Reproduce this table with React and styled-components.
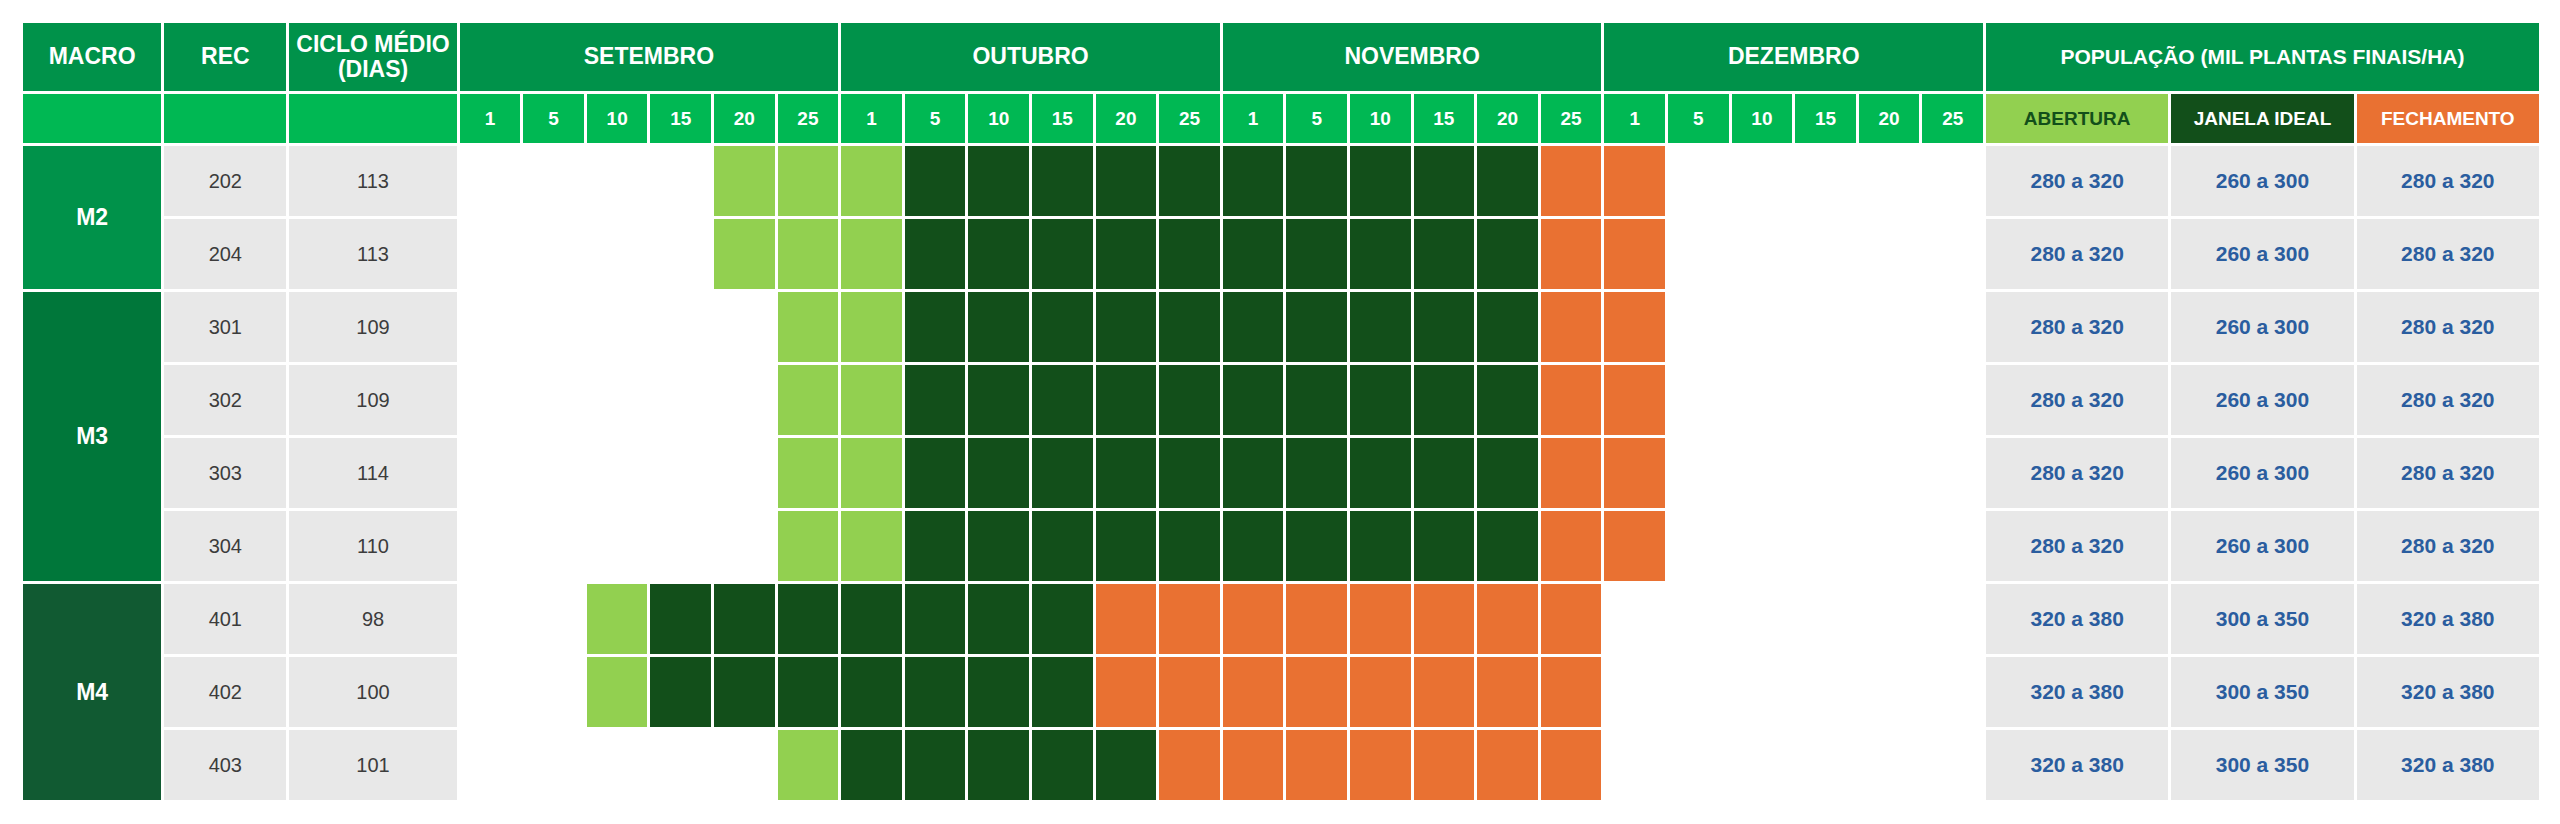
import React from 'react'
import styled, { createGlobalStyle } from 'styled-components'

const colors = {
  header: '#00924a',
  sub: '#00b853',
  m2: '#00924a',
  m3: '#00773a',
  m4: '#115a32',
  open: '#92d050',
  ideal: '#124f1a',
  close: '#e97132',
  gray: '#e8e8e8',
  text: '#3c3c3c',
  blue: '#2a5d9f',
}

const months = ['SETEMBRO', 'OUTUBRO', 'NOVEMBRO', 'DEZEMBRO']
const days = [1, 5, 10, 15, 20, 25]

const groups = [
  {
    macro: 'M2',
    tone: colors.m2,
    pop: ['280 a 320', '260 a 300', '280 a 320'],
    rows: [
      { rec: '202', ciclo: '113', open: [4, 6], ideal: [7, 16], close: [17, 18] },
      { rec: '204', ciclo: '113', open: [4, 6], ideal: [7, 16], close: [17, 18] },
    ],
  },
  {
    macro: 'M3',
    tone: colors.m3,
    pop: ['280 a 320', '260 a 300', '280 a 320'],
    rows: [
      { rec: '301', ciclo: '109', open: [5, 6], ideal: [7, 16], close: [17, 18] },
      { rec: '302', ciclo: '109', open: [5, 6], ideal: [7, 16], close: [17, 18] },
      { rec: '303', ciclo: '114', open: [5, 6], ideal: [7, 16], close: [17, 18] },
      { rec: '304', ciclo: '110', open: [5, 6], ideal: [7, 16], close: [17, 18] },
    ],
  },
  {
    macro: 'M4',
    tone: colors.m4,
    pop: ['320 a 380', '300 a 350', '320 a 380'],
    rows: [
      { rec: '401', ciclo: '98', open: [2, 2], ideal: [3, 9], close: [10, 17] },
      { rec: '402', ciclo: '100', open: [2, 2], ideal: [3, 9], close: [10, 17] },
      { rec: '403', ciclo: '101', open: [5, 5], ideal: [6, 10], close: [11, 17] },
    ],
  },
]

const phaseAt = (row, i) => {
  const inside = ([a, b]) => i >= a && i <= b
  if (inside(row.open)) return colors.open
  if (inside(row.ideal)) return colors.ideal
  if (inside(row.close)) return colors.close
  return 'transparent'
}

const App = () => {
  return (
    <>
      <GlobalStyle />
      <Page>
        <Table>
          <colgroup>
            <Col $w={138} />
            <Col $w={122} />
            <Col $w={167} />
            {Array.from({ length: 24 }).map((_, i) => (
              <Col key={i} $w={60.5} />
            ))}
            <Col $w={182} />
            <Col $w={182} />
            <Col $w={182} />
          </colgroup>
          <thead>
            <tr>
              <TopHead>MACRO</TopHead>
              <TopHead>REC</TopHead>
              <TopHead $tight>
                CICLO MÉDIO
                <br />
                (DIAS)
              </TopHead>
              {months.map((m) => (
                <TopHead key={m} colSpan={6}>
                  {m}
                </TopHead>
              ))}
              <TopHead colSpan={3} $small>
                POPULAÇÃO (MIL PLANTAS FINAIS/HA)
              </TopHead>
            </tr>
            <tr>
              <SubHead />
              <SubHead />
              <SubHead />
              {months.map((m) =>
                days.map((d) => <SubHead key={m + d}>{d}</SubHead>)
              )}
              <SubHead $bg={colors.open} $fg={colors.ideal}>
                ABERTURA
              </SubHead>
              <SubHead $bg={colors.ideal}>JANELA IDEAL</SubHead>
              <SubHead $bg={colors.close}>FECHAMENTO</SubHead>
            </tr>
          </thead>
          <tbody>
            {groups.map((g) =>
              g.rows.map((row, idx) => (
                <tr key={row.rec}>
                  {idx === 0 && (
                    <MacroCell rowSpan={g.rows.length} $bg={g.tone}>
                      {g.macro}
                    </MacroCell>
                  )}
                  <DataCell>{row.rec}</DataCell>
                  <DataCell>{row.ciclo}</DataCell>
                  {Array.from({ length: 24 }).map((_, i) => (
                    <SlotCell key={i} $bg={phaseAt(row, i)} />
                  ))}
                  {g.pop.map((p, i) => (
                    <PopCell key={i}>{p}</PopCell>
                  ))}
                </tr>
              ))
            )}
          </tbody>
        </Table>
      </Page>
    </>
  )
}

const GlobalStyle = createGlobalStyle`
  * {
    box-sizing: border-box;
  }

  body {
    margin: 0;
    background: #ffffff;
    font-family: "Liberation Sans", Arial, sans-serif;
  }
`

const Page = styled.main`
  padding: 20px;
`

const Table = styled.table`
  border-collapse: separate;
  border-spacing: 3px;
  table-layout: fixed;
  width: 2522px;
`

const Col = styled.col`
  width: ${({ $w }) => $w}px;
`

const TopHead = styled.th`
  background: ${colors.header};
  color: #ffffff;
  font-size: ${({ $small }) => ($small ? '21px' : '23px')};
  font-weight: 700;
  height: 68px;
  line-height: ${({ $tight }) => ($tight ? '25px' : '1.2')};
  padding: 0 2px;
  text-align: center;
  vertical-align: middle;
`

const SubHead = styled.th`
  background: ${({ $bg }) => $bg || colors.sub};
  color: ${({ $fg }) => $fg || '#ffffff'};
  font-size: 19px;
  font-weight: 700;
  height: 49px;
  padding: 0;
  text-align: center;
  vertical-align: middle;
`

const MacroCell = styled.td`
  background: ${({ $bg }) => $bg};
  color: #ffffff;
  font-size: 23px;
  font-weight: 700;
  text-align: center;
  vertical-align: middle;
`

const DataCell = styled.td`
  background: ${colors.gray};
  color: ${colors.text};
  font-size: 20px;
  height: 70px;
  padding: 0;
  text-align: center;
  vertical-align: middle;
`

const SlotCell = styled.td`
  background: ${({ $bg }) => $bg};
  height: 70px;
  padding: 0;
`

const PopCell = styled(DataCell)`
  color: ${colors.blue};
  font-size: 21px;
  font-weight: 700;
`

export default App
